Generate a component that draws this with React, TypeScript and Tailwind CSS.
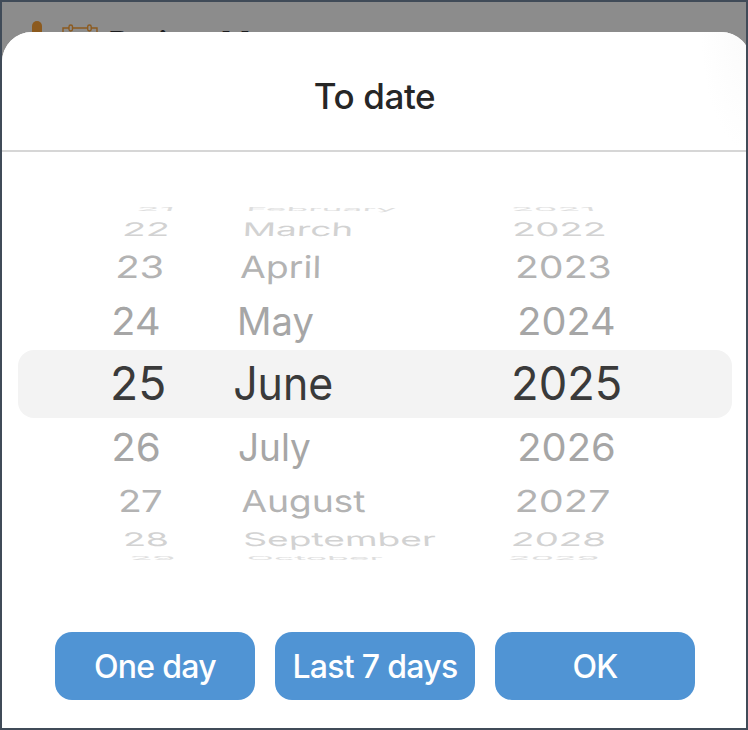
import { useState } from "react";

interface Cell {
  text: string;
  left: number;
  width: number;
  skew?: number;
}

interface WheelRow {
  height: number;
  capHeight: number;
  color: string;
  cells: Cell[];
}

const FONT = '"Inter", "Liberation Sans", sans-serif';

// left and width are the visible edges of each label on the curved wheel
const rows: WheelRow[] = [
  {
    height: 10.6,
    capHeight: 4,
    color: "text-[#dedede]",
    cells: [
      { text: "21", left: 138.5, width: 34, skew: -20 },
      { text: "February", left: 249, width: 147, skew: -8 },
      { text: "2021", left: 513, width: 80, skew: 20 },
    ],
  },
  {
    height: 27.8,
    capHeight: 13.6,
    color: "text-[#d2d2d2]",
    cells: [
      { text: "22", left: 124.6, width: 43, skew: -6 },
      { text: "March", left: 245.5, width: 105.5, skew: -3 },
      { text: "2022", left: 514, width: 90, skew: 6 },
    ],
  },
  {
    height: 49.2,
    capHeight: 22.2,
    color: "text-[#b3b3b3]",
    cells: [
      { text: "23", left: 117.7, width: 45, skew: -3 },
      { text: "April", left: 240.3, width: 79, skew: -1 },
      { text: "2023", left: 517, width: 93, skew: 2 },
    ],
  },
  {
    height: 58.4,
    capHeight: 27.8,
    color: "text-[#a6a6a6]",
    cells: [
      { text: "24", left: 113.3, width: 45.7, skew: -1 },
      { text: "May", left: 240, width: 73.5 },
      { text: "2024", left: 519.3, width: 94.7 },
    ],
  },
  {
    height: 68,
    capHeight: 33.5,
    color: "text-[#3a3a3a]",
    cells: [
      { text: "25", left: 113, width: 51.3 },
      { text: "June", left: 235, width: 96.5 },
      { text: "2025", left: 514, width: 106.3 },
    ],
  },
  {
    height: 58,
    capHeight: 27.8,
    color: "text-[#a6a6a6]",
    cells: [
      { text: "26", left: 113.3, width: 45.7, skew: 1 },
      { text: "July", left: 239, width: 71.5 },
      { text: "2026", left: 519.3, width: 94.7 },
    ],
  },
  {
    height: 50.2,
    capHeight: 22,
    color: "text-[#b3b3b3]",
    cells: [
      { text: "27", left: 120, width: 41.7, skew: 3 },
      { text: "August", left: 241.3, width: 123.7, skew: 1 },
      { text: "2027", left: 517, width: 91.5, skew: -2 },
    ],
  },
  {
    height: 26.2,
    capHeight: 13.6,
    color: "text-[#d2d2d2]",
    cells: [
      { text: "28", left: 124.8, width: 42.5, skew: 6 },
      { text: "September", left: 245, width: 190.5, skew: 3 },
      { text: "2028", left: 513.3, width: 91.3, skew: -6 },
    ],
  },
  {
    height: 11.6,
    capHeight: 4,
    color: "text-[#dedede]",
    cells: [
      { text: "29", left: 131.5, width: 42.5, skew: 20 },
      { text: "October", left: 248.7, width: 134, skew: 8 },
      { text: "2029", left: 510, width: 88, skew: -20 },
    ],
  },
];

const CAP_RATIO = 0.727;
const ctx = document.createElement("canvas").getContext("2d")!;

function measureInk(text: string, size: number) {
  ctx.font = `400 ${size}px ${FONT}`;
  const m = ctx.measureText(text);
  return {
    left: -m.actualBoundingBoxLeft,
    width: m.actualBoundingBoxLeft + m.actualBoundingBoxRight,
  };
}

// squeezes a label to the height and width it has at its place on the wheel
function WheelLabel({ cell, row, selected }: { cell: Cell; row: WheelRow; selected: boolean }) {
  const size = selected ? 46 : 38;
  const ink = measureInk(cell.text, size);
  const scaleX = cell.width / ink.width;
  const scaleY = row.capHeight / (size * CAP_RATIO);
  const shift = cell.left - 2 - ink.left * scaleX;
  const lift = selected ? -0.6 : -0.1;

  return (
    <span
      className="col-start-1 row-start-1 block w-max origin-left whitespace-nowrap leading-none"
      style={{
        fontSize: size,
        transform: `translate(${shift}px, ${lift}px) skewX(${cell.skew ?? 0}deg) scale(${scaleX}, ${scaleY})`,
      }}
    >
      {cell.text}
    </span>
  );
}

function PageHeader() {
  return (
    <div className="flex h-[30px] items-start pl-[30px] pt-[19px] text-[#1c1c1e]">
      <div className="h-8 w-[10px] shrink-0 rounded-full bg-[#8c5a1e]" />
      <svg className="ml-[19px] mt-[2px] shrink-0" width="38" height="34" viewBox="0 0 38 34" fill="none" stroke="#8c5a1e" strokeWidth="1.4">
        <path d="M8 5H2v28h34V5H30M11.5 5h15" />
        <rect x="8" y="2" width="3.5" height="6" rx="1.75" />
        <rect x="26.7" y="2" width="3.5" height="6" rx="1.75" />
      </svg>
      <span className="ml-[9px] mt-[2px] whitespace-nowrap text-[33px] font-semibold leading-10 tracking-[-1.1px]">
        Project Management
      </span>
    </div>
  );
}

const actions = ["One day", "Last 7 days", "OK"];

export default function App() {
  const [selected] = useState(4);

  return (
    <div className="h-[730px] w-[748px] overflow-hidden border-2 border-[#404b58] bg-[#8c8c8c] font-['Inter','Liberation_Sans',sans-serif]">
      <PageHeader />

      <div className="relative -mr-[5px] h-[698px] overflow-hidden rounded-t-[30px] bg-white">
        <div className="flex h-[120px] items-center justify-center border-b-2 border-[#d6d6d6] bg-[radial-gradient(ellipse_50px_120px_at_100%_0,#fafafa_0,#ffffff_100%)] pr-[4px] pt-[10px]">
          <h1 className="text-[35px] font-medium leading-none tracking-[-0.4px] text-[#262626]">To date</h1>
        </div>

        <div className="h-[480px] w-[744px] pt-[52px]">
          {rows.map((row, i) => (
            <div key={i} className={`relative grid items-center ${row.color}`} style={{ height: row.height, gridTemplateRows: row.height }}>
              {i === selected && <div className="absolute inset-y-0 left-4 right-[14px] rounded-2xl bg-[#f3f3f3]" />}
              {row.cells.map((cell) => (
                <WheelLabel key={cell.text} cell={cell} row={row} selected={i === selected} />
              ))}
            </div>
          ))}
        </div>

        <div className="flex gap-5 pl-[53px]">
          {actions.map((label) => (
            <button
              key={label}
              className="h-[68px] w-[200px] rounded-[17px] bg-[#5094d4] pt-[2px] text-[32px] font-medium leading-none tracking-[-0.7px] text-white"
            >
              {label}
            </button>
          ))}
        </div>
      </div>
    </div>
  );
}
